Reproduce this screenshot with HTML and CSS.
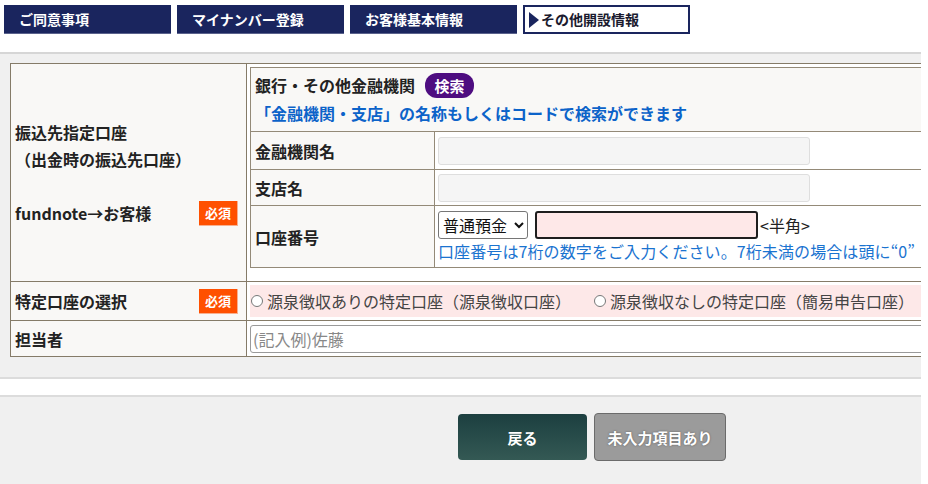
FILE: index.html
```html
<!DOCTYPE html>
<html lang="ja">
<head>
    <meta charset="UTF-8">
    <meta name="viewport" content="width=device-width, initial-scale=1.0">
    <title>口座開設 - その他開設情報</title>
    <link rel="stylesheet" href="styles.css">
</head>
<body>

    <div class="page">

        <ul class="steps">
            <li class="step">ご同意事項</li>
            <li class="step">マイナンバー登録</li>
            <li class="step">お客様基本情報</li>
            <li class="step current"><span class="arrow"></span>その他開設情報</li>
        </ul>

        <div class="formArea">
            <table class="form">
                <tr>
                    <th class="mainLabel">
                        <div class="labelLines">
                            <span>振込先指定口座</span>
                            <span>（出金時の振込先口座）</span>
                            <span>&nbsp;</span>
                            <span class="withBadge">fundnote→お客様<em class="req">必須</em></span>
                        </div>
                    </th>
                    <td class="bankCell">
                        <table class="bank">
                            <tr>
                                <td class="bankHead" colspan="2">
                                    <div class="bankTitle">銀行・その他金融機関<button class="search" type="button">検索</button></div>
                                    <div class="bankNote">「金融機関・支店」の名称もしくはコードで検索ができます</div>
                                </td>
                            </tr>
                            <tr class="rowName">
                                <th>金融機関名</th>
                                <td><input class="readonly" type="text" readonly></td>
                            </tr>
                            <tr class="rowBranch">
                                <th>支店名</th>
                                <td><input class="readonly" type="text" readonly></td>
                            </tr>
                            <tr class="rowNumber">
                                <th>口座番号</th>
                                <td>
                                    <div class="numberLine">
                                        <select class="kind">
                                            <option>普通預金</option>
                                            <option>当座預金</option>
                                        </select>
                                        <input class="number" type="text">
                                        <span class="hankaku">&lt;半角&gt;</span>
                                    </div>
                                    <p class="help">口座番号は7桁の数字をご入力ください。7桁未満の場合は頭に“0”</p>
                                </td>
                            </tr>
                        </table>
                    </td>
                </tr>
                <tr class="rowTokutei">
                    <th><span class="withBadge">特定口座の選択<em class="req">必須</em></span></th>
                    <td>
                        <div class="radios">
                            <label><input type="radio" name="tokutei">源泉徴収ありの特定口座（源泉徴収口座）</label>
                            <label><input type="radio" name="tokutei">源泉徴収なしの特定口座（簡易申告口座）</label>
                        </div>
                    </td>
                </tr>
                <tr class="rowStaff">
                    <th>担当者</th>
                    <td><input class="staff" type="text" placeholder="(記入例)佐藤"></td>
                </tr>
            </table>
        </div>

        <div class="footer">
            <button class="btn back" type="button">戻る</button>
            <button class="btn pending" type="button">未入力項目あり</button>
        </div>

    </div>

</body>
</html>
```

FILE: styles.css
```css
*{
    margin: 0;
    padding: 0;
    box-sizing: border-box;
}

body{
    background: #fff;
    font-family: "Noto Sans CJK JP", "Noto Sans", sans-serif;
    color: #222;
}

.page{
    width: 921px;
    overflow: hidden;
}

/* step tabs */

.steps{
    list-style: none;
    display: flex;
    gap: 6px;
    padding: 5px 0 0 4px;
    height: 52px;
}

.step{
    width: 167px;
    height: 29px;
    background: #1a255e;
    color: #fff;
    font-size: 14px;
    font-weight: 700;
    line-height: 29px;
    padding-left: 15px;
    border-bottom: 1px solid #5a628c;
}

.step.current{
    background: #fff;
    color: #1a1a2e;
    border: 2px solid #1a255e;
    padding-left: 4px;
    line-height: 25px;
    display: flex;
    align-items: center;
}

.arrow{
    width: 0;
    height: 0;
    border-top: 8px solid transparent;
    border-bottom: 8px solid transparent;
    border-left: 10px solid #1a255e;
    margin-right: 2px;
}

/* form */

.formArea{
    background: #f0f0f0;
    border-top: 2px solid #d6d6d6;
    border-bottom: 2px solid #dcdcdc;
    padding: 9px 0 20px 10px;
    overflow: hidden;
}

.form{
    width: 1100px;
    border-collapse: collapse;
    background: #f9f8f6;
}

.form > tbody > tr > th,
.form > tbody > tr > td{
    border: 1px solid #857b68;
}

.form > tbody > tr > th{
    width: 236px;
    text-align: left;
    font-size: 16px;
    font-weight: 700;
    padding: 0 8px 0 4px;
    vertical-align: middle;
}

.labelLines{
    display: flex;
    flex-direction: column;
    line-height: 27px;
}

.withBadge{
    display: flex;
    justify-content: space-between;
    align-items: center;
}

.req{
    font-style: normal;
    background: #ff5000;
    color: #fff;
    font-size: 13px;
    font-weight: 700;
    width: 39px;
    height: 25px;
    line-height: 24px;
    text-align: center;
    border-right: 1px solid #f7b090;
    border-bottom: 1px solid #f7b090;
}

.bankCell{
    vertical-align: top;
    padding: 3px 0 13px 3px;
    background: #fff;
}

.bank{
    width: 100%;
    border-collapse: collapse;
    background: #fff;
}

.bank th,
.bank td{
    border: 1px solid #948a78;
}

.bank th{
    width: 184px;
    background: #f9f8f6;
    text-align: left;
    font-size: 16px;
    font-weight: 700;
    padding-left: 4px;
}

.bank td{
    padding: 0 3px;
}

.bankHead{
    background: #f9f8f6;
    height: 64px;
    padding: 4px 4px 0 !important;
    vertical-align: top;
}

.bankTitle{
    display: flex;
    align-items: center;
    font-size: 16px;
    font-weight: 700;
    height: 26px;
}

.search{
    margin-left: 10px;
    background: #4e0d80;
    color: #fff;
    border: none;
    border-radius: 12px;
    font-family: inherit;
    font-size: 15px;
    font-weight: 700;
    width: 49px;
    height: 25px;
}

.bankNote{
    color: #0c63c9;
    font-size: 16px;
    font-weight: 700;
    margin-top: 3px;
    line-height: 24px;
}

.rowName{
    height: 38px;
}

.rowBranch{
    height: 36px;
}

.rowNumber{
    height: 62px;
}

.readonly{
    width: 372px;
    height: 28px;
    background: #f5f5f5;
    border: 1px solid #dedede;
    border-radius: 3px;
    display: block;
}

.numberLine{
    display: flex;
    align-items: center;
    gap: 7px;
    margin-top: 1px;
}

.kind{
    width: 90px;
    height: 28px;
    font-family: inherit;
    font-size: 16px;
    color: #111;
    border: 1px solid #767676;
    border-radius: 3px;
    background: #fff;
}

.number{
    width: 223px;
    height: 28px;
    background: #fee8e8;
    border: 2px solid #1e1e1e;
    border-radius: 3px;
}

.hankaku{
    font-size: 16px;
    margin-left: -5px;
    color: #222;
}

.help{
    color: #1a73d0;
    font-size: 16px;
    line-height: 24px;
    letter-spacing: 0.1px;
    white-space: nowrap;
}

.rowTokutei{
    height: 39px;
}

.rowTokutei td{
    padding: 3px 0 3px 3px;
    background: #fff;
}

.radios{
    background: #fde8e8;
    height: 32px;
    display: flex;
    align-items: center;
    gap: 22px;
    font-size: 16px;
    color: #444;
}

.radios label{
    display: flex;
    align-items: center;
    white-space: nowrap;
}

.radios input{
    width: 12px;
    height: 12px;
    margin: 0 4px 0 1px;
}

.rowStaff{
    height: 36px;
}

.rowStaff td{
    padding: 3px 0 3px 3px;
    background: #fff;
}

.staff{
    width: 100%;
    height: 28px;
    border: 1px solid #9a9a9a;
    border-radius: 3px;
    font-family: inherit;
    font-size: 16px;
    padding-left: 2px;
}

.staff::placeholder{
    color: #888;
}

/* footer */

.footer{
    margin-top: 16px;
    background: #f0f0f0;
    border-top: 2px solid #dcdcdc;
    height: 89px;
    display: flex;
    align-items: flex-start;
    gap: 7px;
    padding: 16px 0 0 458px;
}

.btn{
    font-family: inherit;
    font-size: 15px;
    font-weight: 700;
    color: #fff;
    border-radius: 4px;
}

.back{
    width: 129px;
    height: 46px;
    margin-top: 1px;
    border: none;
    background: linear-gradient(#1c3f40, #345954);
}

.pending{
    width: 132px;
    height: 48px;
    background: #9b9b9b;
    border: 1px solid #6b6b6b;
    text-shadow: 0 0 2px #555;
}
```
